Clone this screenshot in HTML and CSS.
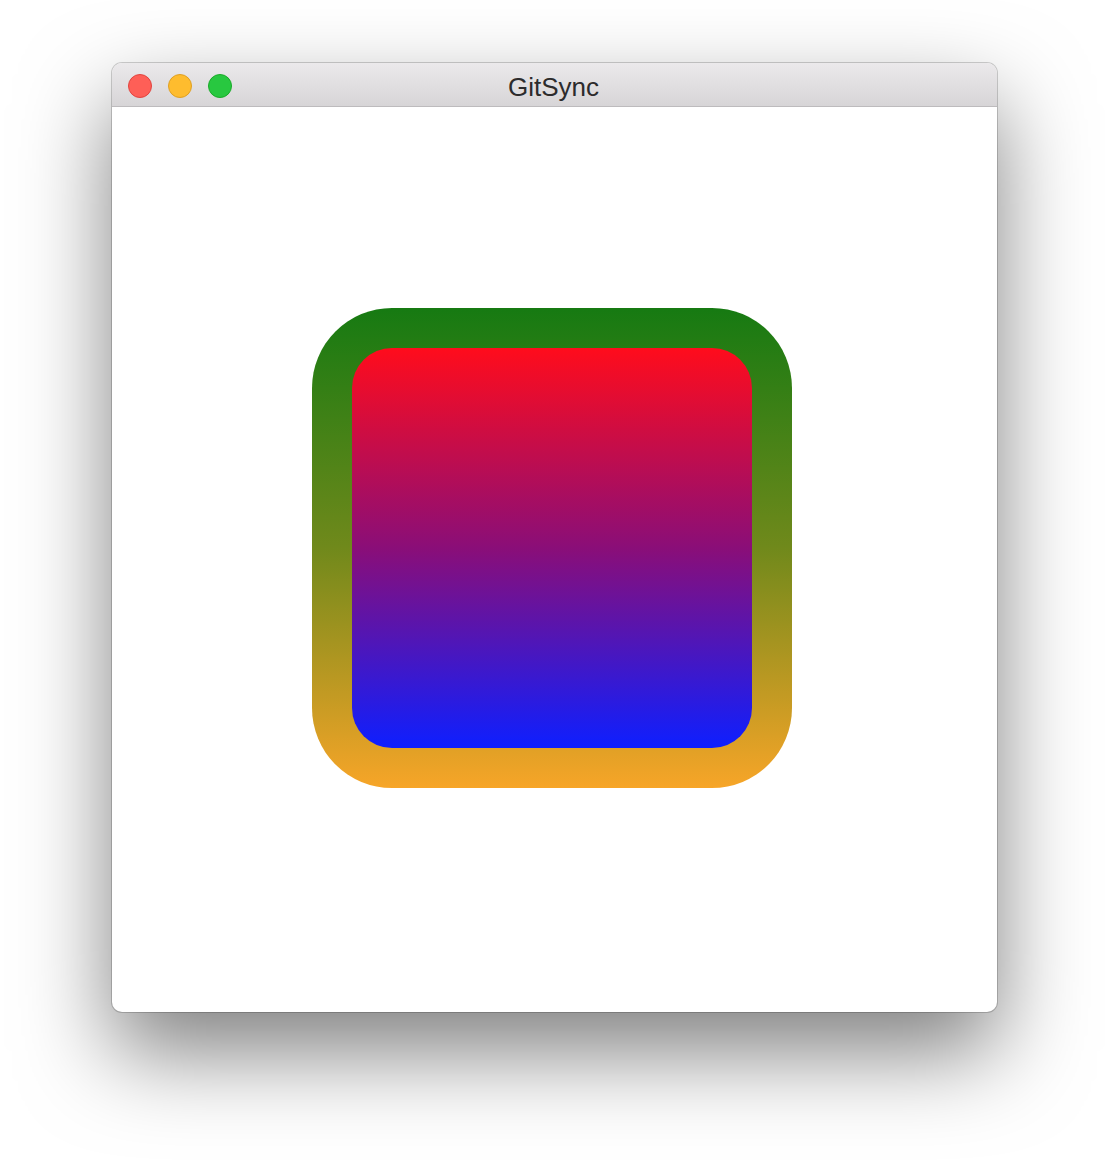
FILE: index.html
```html
<!DOCTYPE html>
<html>
<head>
<meta charset="utf-8">
<link rel="stylesheet" href="styles.css">
</head>
<body>
<div class="window">
  <div class="titlebar">
    <div class="lights">
      <span class="light red"></span>
      <span class="light yellow"></span>
      <span class="light green"></span>
    </div>
    <div class="title">GitSync</div>
  </div>
  <div class="content">
    <div class="outer">
      <div class="inner"></div>
    </div>
  </div>
</div>
</body>
</html>
```

FILE: styles.css
```css
html, body {
  margin: 0;
  padding: 0;
  background: #ffffff;
}
body {
  width: 1108px;
  height: 1172px;
  overflow: hidden;
  font-family: "Liberation Sans", Arial, sans-serif;
}
.window {
  margin: 63px 0 0 112px;
  width: 885px;
  height: 949px;
  border-radius: 10px;
  background: #ffffff;
  box-shadow: 0 0 0 1px rgba(0,0,0,0.18), 0 40px 90px rgba(0,0,0,0.5);
  overflow: hidden;
  display: flex;
  flex-direction: column;
}
.titlebar {
  height: 43px;
  border-bottom: 1px solid #bdbbbd;
  background: linear-gradient(#ebe9eb, #d7d5d7);
  position: relative;
  display: flex;
  align-items: center;
  justify-content: center;
  flex: none;
}
.lights {
  position: absolute;
  left: 16px;
  top: 11px;
  display: flex;
  gap: 16px;
}
.light {
  width: 22px;
  height: 22px;
  border-radius: 50%;
  display: block;
  border: 1px solid transparent;
}
.red { background: #fe5f57; border-color: #e1443f; }
.yellow { background: #febc2e; border-color: #dfa023; }
.green { background: #28c840; border-color: #1aab29; }
.title {
  font-size: 26px;
  color: #2c2b2c;
  font-family: "Liberation Sans", Arial, sans-serif;
  margin-left: -2px;
  margin-top: 5px;
}
.content {
  flex: 1;
  display: flex;
  justify-content: center;
  padding-top: 201px;
  padding-right: 5px;
}
.outer {
  width: 480px;
  height: 480px;
  border-radius: 80px;
  background: linear-gradient(#167a12 0%, #70891b 50%, #f7a528 100%);
  display: flex;
  align-items: center;
  justify-content: center;
}
.inner {
  width: 400px;
  height: 400px;
  border-radius: 40px;
  background: linear-gradient(#ff0c1c 0%, #8a0e78 50%, #0e1fff 100%);
}
```
